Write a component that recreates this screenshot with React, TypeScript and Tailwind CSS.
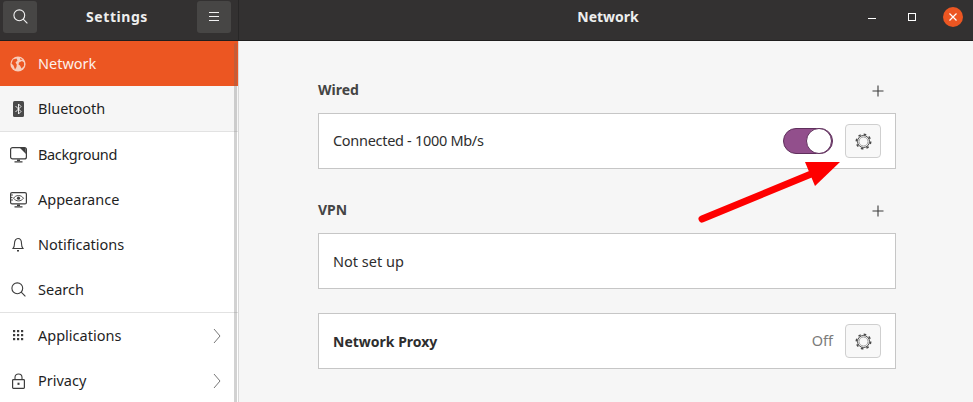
import React from "react";

const font = "[font-family:'Noto_Sans',sans-serif]";

function Gear() {
  return (
    <svg width="17" height="17" viewBox="0 0 17 17" fill="none">
      <circle cx="8.5" cy="8.5" r="7.2" stroke="#4a4a4a" strokeWidth="1.5" strokeDasharray="2.6 3.05" />
      <circle cx="8.5" cy="8.5" r="6" stroke="#4a4a4a" strokeWidth="1" />
      <circle cx="8.5" cy="8.5" r="4.5" stroke="#a0a0a0" strokeWidth="1" />
    </svg>
  );
}

function GearButton() {
  return (
    <div className="w-9 h-[34px] rounded-[4px] border border-[#cfcfcf] bg-[#f8f8f8] flex items-center justify-center">
      <Gear />
    </div>
  );
}

function Plus() {
  return (
    <svg className="mt-[3px]" width="12" height="12" viewBox="0 0 12 12" stroke="#3d3d3d" strokeWidth="1.1">
      <path d="M6 0.5V11.5M0.5 6H11.5" />
    </svg>
  );
}

function Chevron() {
  return (
    <svg width="8" height="16" viewBox="0 0 8 16" fill="none" stroke="#777" strokeWidth="1">
      <path d="M1 1L7 8L1 15" />
    </svg>
  );
}

const c = "#3d3d3d";
const icons: Record<string, React.ReactNode> = {
  Network: (
    <svg width="16" height="16" viewBox="0 0 16 16" fill="none">
      <circle cx="8" cy="8" r="7.6" fill="#f7cdbb" />
      <path d="M3 3.5L6.5 2.5L7.5 4.5L5.5 6.5L6.8 8.5L6.5 11L5 13.5L3.5 9.5L1.5 7.5ZM9 6.5L12 5L14 6.5L14 10L11.5 12.5L10 9.5L8.5 8.5ZM10 2L12.5 3.5L10.5 4Z" fill="#ec5622" />
    </svg>
  ),
  Bluetooth: (
    <svg width="11" height="16" viewBox="0 0 11 16" fill="none">
      <rect width="11" height="16" rx="1.5" fill="#4a4a4a" />
      <path d="M2.5 5L8 10.5L5.5 13V3L8 5.5L2.5 11" stroke="#fff" strokeWidth="0.9" />
    </svg>
  ),
  Background: (
    <svg width="17" height="16" viewBox="0 0 17 16" fill="none">
      <rect x="0.6" y="0.6" width="15.8" height="11.3" rx="2" stroke={c} strokeWidth="1.2" />
      <path d="M10 1H15.5L16 7Z" fill={c} />
      <path d="M7 12.5H10V14H7ZM4.5 14.2H12.5V15.4H4.5Z" fill={c} />
    </svg>
  ),
  Appearance: (
    <svg width="17" height="16" viewBox="0 0 17 16" fill="none">
      <rect x="0.6" y="0.6" width="15.8" height="11.3" rx="1.5" stroke={c} strokeWidth="1.2" />
      <path d="M3.5 6.2C6 2.6 11 2.6 13.5 6.2C11 9.8 6 9.8 3.5 6.2Z" stroke={c} strokeWidth="0.9" />
      <circle cx="8.5" cy="6.2" r="1.6" fill={c} />
      <path d="M1 3H3M1 5.5H2.5M1 8H3" stroke={c} strokeWidth="0.9" />
      <path d="M7 12.5H10V14H7ZM4.5 14.2H12.5V15.4H4.5Z" fill={c} />
    </svg>
  ),
  Notifications: (
    <svg width="12" height="15" viewBox="0 0 12 15" fill="none" stroke={c}>
      <path d="M1 11.5C2.3 10 2.5 9 2.5 6.5C2.5 3.5 4 1.5 6 1.5C8 1.5 9.5 3.5 9.5 6.5C9.5 9 9.7 10 11 11.5Z" strokeWidth="1.1" />
      <path d="M5 13.8H7" strokeWidth="1.4" />
    </svg>
  ),
  Search: (
    <svg width="15" height="15" viewBox="0 0 15 15" fill="none" stroke={c} strokeWidth="1.1">
      <circle cx="6.3" cy="6.3" r="5.4" />
      <path d="M10.2 10.2L14.4 14.4" />
    </svg>
  ),
  Applications: (
    <svg width="11" height="11" viewBox="0 0 11 11" fill={c}>
      {[0, 4, 8].map((y) =>
        [0, 4, 8].map((x) => <rect key={`${x}-${y}`} x={x} y={y} width="2.2" height="2.2" />)
      )}
    </svg>
  ),
  Privacy: (
    <svg width="13" height="16" viewBox="0 0 13 16" fill="none">
      <path d="M3 7V4.5C3 2.5 4.5 1 6.5 1C8.5 1 10 2.5 10 4.5V7" stroke={c} strokeWidth="1.1" />
      <rect x="0.6" y="6.6" width="11.8" height="8.8" rx="0.8" stroke={c} strokeWidth="1.2" />
      <rect x="5.5" y="9.7" width="2" height="2.2" fill={c} />
    </svg>
  ),
};

const rows = [
  { name: "Network", h: "h-[45px]", active: true },
  { name: "Bluetooth", h: "h-[46px]", border: true },
  { name: "Background", h: "h-[45px]", tight: true },
  { name: "Appearance", h: "h-[45px]" },
  { name: "Notifications", h: "h-[45px]" },
  { name: "Search", h: "h-[46px]", border: true },
  { name: "Applications", h: "h-[45px]", chevron: true },
  { name: "Privacy", h: "h-[45px]", chevron: true },
];

export default function App() {
  return (
    <div className={`relative w-[973px] h-[402px] overflow-hidden bg-[#f6f6f6] flex flex-col ${font}`}>
      <header className="h-[41px] shrink-0 bg-[#333131] border-b border-[#1f1e1e] flex text-white">
        <div className="w-[239px] shrink-0 border-r border-[#282727] flex items-center justify-between px-[3px] pb-[7px]">
          <div className="w-[34px] h-[32px] rounded-[3px] bg-[#474645] flex items-center justify-center">
            <svg width="15" height="15" viewBox="0 0 15 15" fill="none" stroke="#f2f2f2" strokeWidth="1.1">
              <circle cx="6.3" cy="6.3" r="5.4" />
              <path d="M10.2 10.2L14.4 14.4" />
            </svg>
          </div>
          <span className="text-[14px] font-bold tracking-[0.55px] text-[#eeeeee]">Settings</span>
          <div className="w-[34px] h-[32px] mr-[4px] rounded-[3px] bg-[#474645] flex items-center justify-center">
            <svg width="10" height="9" viewBox="0 0 10 9" stroke="#f2f2f2" strokeWidth="1">
              <path d="M0 0.5H10M0 4.5H10M0 8.5H10" />
            </svg>
          </div>
        </div>
        <div className="flex-1 flex items-center relative pb-[7px]">
          <span className="flex-1 text-center text-[14px] font-bold text-[#eeeeee] pl-[4px]">Network</span>
          <div className="absolute right-[10px] top-[7px] flex items-center gap-[32px]">
            <div className="w-2 h-[20px] flex items-center"><div className="w-2 h-px bg-white mt-[3px]" /></div>
            <div className="w-2 h-2 border border-white" />
            <div className="w-5 h-5 -ml-[5px] rounded-full bg-[#ec5622] flex items-center justify-center">
              <svg width="8" height="8" viewBox="0 0 8 8" stroke="#fff" strokeWidth="1.2">
                <path d="M0.5 0.5L7.5 7.5M7.5 0.5L0.5 7.5" />
              </svg>
            </div>
          </div>
        </div>
      </header>

      <div className="flex-1 flex min-h-0">
        <aside className="w-[239px] shrink-0 bg-white border-r border-[#d8d8d8] relative overflow-hidden">
          {rows.map((r) => (
            <div
              key={r.name}
              className={`${r.h} flex items-center text-[14.5px] ${r.active ? "bg-[#ec5622] text-[#fdf0ea]" : r.name === "Bluetooth" ? "bg-[#f6f6f6] text-[#1f1f1f]" : "bg-white text-[#1f1f1f]"} ${r.border ? "border-b border-[#e2e2e2]" : ""}`}
            >
              <div className="w-[38px] shrink-0 flex justify-center pr-[2px]">{icons[r.name]}</div>
              <span className={r.tight ? "tracking-[-0.35px]" : ""}>{r.name}</span>
              {r.chevron && <div className="ml-auto mr-[17px] flex"><Chevron /></div>}
            </div>
          ))}
          <div className="absolute right-[1px] top-[2px] bottom-0 w-[3px] bg-[#6b6b6b]/30 rounded-t-[2px]" />
        </aside>

        <main className="flex-1 pl-[79px] pt-[37px] text-[#2e2e2e]">
          <div className="w-[578px] flex flex-col">
            <div className="h-[22px] flex items-center justify-between pr-[12px]">
              <span className="text-[14px] font-bold text-[#444]">Wired</span>
              <Plus />
            </div>
            <div className="mt-[13px] h-[56px] border border-[#c6c6c6] bg-white flex items-center pl-[14px] pr-[14px] text-[14.5px]">
              <span className="tracking-[-0.3px]">Connected - 1000 Mb/s</span>
              <div className="ml-auto mr-[12px] w-[50px] h-[26px] rounded-full bg-[#924f8c] border border-[#5f2f5c] relative">
                <div className="absolute right-0 -top-px w-[26px] h-[26px] rounded-full bg-white border border-[#5f2f5c]" />
              </div>
              <GearButton />
            </div>

            <div className="mt-[29px] h-[22px] flex items-center justify-between pr-[12px]">
              <span className="text-[14px] font-bold text-[#444]">VPN</span>
              <Plus />
            </div>
            <div className="mt-[13px] h-[56px] border border-[#c6c6c6] bg-white flex items-center pl-[14px] pt-[1px] text-[14.5px]">
              Not set up
            </div>

            <div className="mt-[24px] h-[56px] border border-[#c6c6c6] bg-white flex items-center pl-[14px] pr-[14px] text-[14.5px]">
              <span className="font-bold text-[14px]">Network Proxy</span>
              <span className="ml-auto mr-[12px] text-[#7b7b7b]">Off</span>
              <GearButton />
            </div>
          </div>
        </main>
      </div>

      <svg className="absolute left-[690px] top-[150px] pointer-events-none" width="160" height="80" viewBox="690 150 160 80">
        <path d="M702 219L816 172" stroke="#fe0000" strokeWidth="7" strokeLinecap="round" />
        <path d="M805 162L840 162L815 186Z" fill="#fe0000" />
      </svg>
    </div>
  );
}
